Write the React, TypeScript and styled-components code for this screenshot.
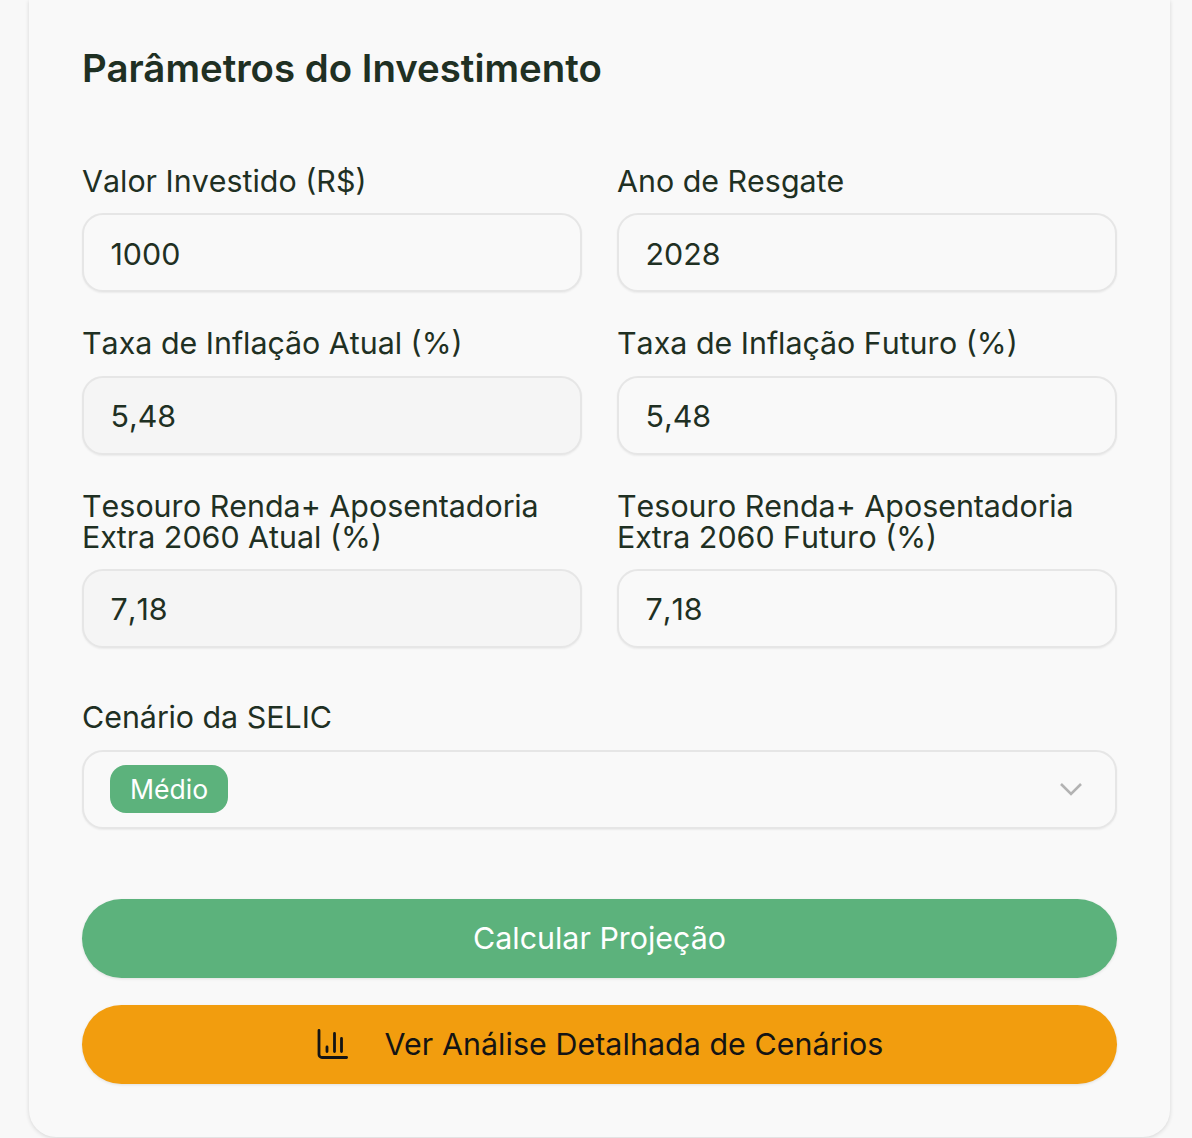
import React from "react";
import styled, { createGlobalStyle } from "styled-components";

const Global = createGlobalStyle`
  html, body { margin: 0; padding: 0; background: #f8f8f8; }
  body { font-family: Inter, "Liberation Sans", sans-serif; overflow: hidden; font-kerning: none; }
  * { box-sizing: border-box; }
`;
const Page = styled.div`
  width: 1192px;
  height: 1138px;
  padding: 0 22px 1px 29px;
`;
const Card = styled.section`
  height: 1137px;
  padding: 44px 53px 53px;
  background: #f9f9f9;
  border-radius: 0 0 27px 27px;
  box-shadow: 0 1px 4px rgba(0, 0, 0, 0.14);
  display: flex;
  flex-direction: column;
`;
const Title = styled.h2`
  margin: 0 0 74px;
  font-size: 38.4px;
  line-height: 48px;
  font-weight: 600;
  font-kerning: normal;
  color: #1f3023;
`;
const Grid = styled.div`
  display: grid;
  grid-template-columns: 500px 500px;
  column-gap: 35px;
  row-gap: 36px;
`;
const Field = styled.div`
  display: flex;
  flex-direction: column;
  justify-content: flex-end;
  gap: 16.6px;
`;
const Label = styled.label`
  font-size: 30.4px;
  line-height: 30.8px;
  font-weight: 400;
  color: #1f3023;
`;
const Input = styled.div<{ $readonly?: boolean }>`
  height: 79px;
  padding: 2px 27px 0 26.5px;
  display: flex;
  align-items: center;
  font-size: 30.4px;
  color: #1f3023;
  background: ${(p) => (p.$readonly ? "#f5f5f5" : "#f9f9f9")};
  border: 2px solid #e6e6e6;
  border-radius: 21px;
  box-shadow: 0 1px 2px rgba(0, 0, 0, 0.06);
`;
const SelectField = styled(Field)`
  margin-top: 54px;
  gap: 17.2px;
`;
const Select = styled.div`
  width: 1035px;
  height: 79px;
  padding: 0 32px 0 26px;
  display: flex;
  align-items: center;
  justify-content: space-between;
  background: #f9f9f9;
  border: 2px solid #e6e6e6;
  border-radius: 21px;
  box-shadow: 0 1px 2px rgba(0, 0, 0, 0.06);
`;
const Chip = styled.span`
  height: 48px;
  padding: 0 20px;
  display: flex;
  align-items: center;
  font-size: 26.6px;
  color: #fff;
  background: #5cb27c;
  border-radius: 16px;
`;
const Button = styled.button<{ $tone: "green" | "amber" }>`
  width: 1035px;
  height: 79px;
  border: 0;
  border-radius: 40px;
  display: flex;
  align-items: center;
  justify-content: center;
  gap: 37px;
  font-family: inherit;
  font-size: 30.4px;
  font-weight: 400;
  letter-spacing: ${(p) => (p.$tone === "amber" ? "0.06px" : "0")};
  color: ${(p) => (p.$tone === "green" ? "#fff" : "#141414")};
  background: ${(p) => (p.$tone === "green" ? "#5cb27c" : "#f29d0e")};
  box-shadow: 0 1px 3px rgba(0, 0, 0, 0.1);
`;
const Actions = styled.div`
  margin-top: 70px;
  display: flex;
  flex-direction: column;
  gap: 27px;
`;

const fields = [
  { label: "Valor Investido (R$)", value: "1000" },
  { label: "Ano de Resgate", value: "2028" },
  { label: "Taxa de Inflação Atual (%)", value: "5,48", readonly: true },
  { label: "Taxa de Inflação Futuro (%)", value: "5,48" },
  { label: "Tesouro Renda+ Aposentadoria Extra 2060 Atual (%)", value: "7,18", readonly: true },
  { label: "Tesouro Renda+ Aposentadoria Extra 2060 Futuro (%)", value: "7,18" },
];

export default function App() {
  return (
    <Page>
      <Global />
      <Card>
        <Title>Parâmetros do Investimento</Title>
        <Grid>
          {fields.map((f) => (
            <Field key={f.label}>
              <Label>{f.label}</Label>
              <Input $readonly={f.readonly}>{f.value}</Input>
            </Field>
          ))}
        </Grid>
        <SelectField>
          <Label>Cenário da SELIC</Label>
          <Select>
            <Chip>Médio</Chip>
            <svg width="24" height="14" viewBox="0 0 24 14" fill="none" stroke="#b3b3b3" strokeWidth="2.6">
              <path d="M2 2l10 10L22 2" />
            </svg>
          </Select>
        </SelectField>
        <Actions>
          <Button $tone="green">Calcular Projeção</Button>
          <Button $tone="amber">
            <svg width="32" height="32" viewBox="0 0 32 32" fill="none" stroke="#141414" strokeWidth="2.8" strokeLinecap="round">
              <path d="M3 2.5V26.5a3 3 0 0 0 3 3H30.6" />
              <path d="M11 19v4.5M18.5 5.5v18M25.5 10.5v13" />
            </svg>
            Ver Análise Detalhada de Cenários
          </Button>
        </Actions>
      </Card>
    </Page>
  );
}
